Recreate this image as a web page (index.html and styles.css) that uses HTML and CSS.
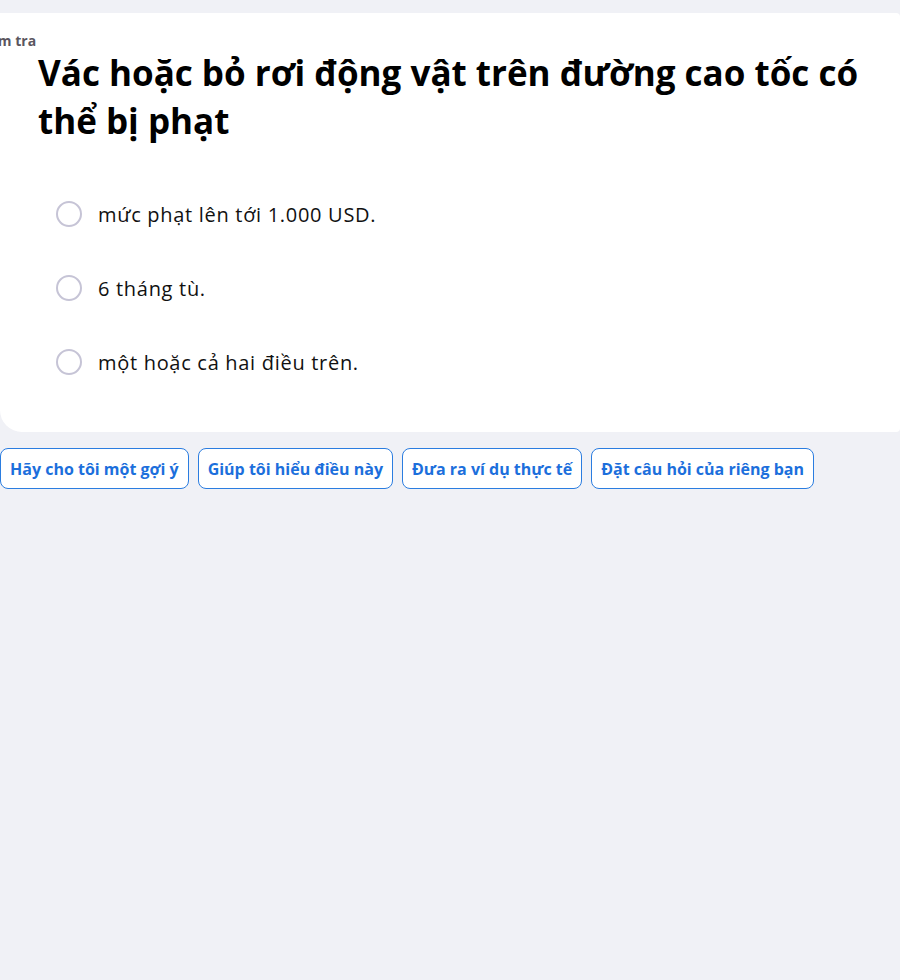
FILE: index.html
```html
<!DOCTYPE html>
<html lang="vi">
<head>
<meta charset="utf-8">
<link rel="stylesheet" href="styles.css">
</head>
<body>
<main class="page">
  <section class="card">
    <div class="label">Kiểm tra</div>
    <h1 class="question">Vác hoặc bỏ rơi động vật trên đường cao tốc có thể bị phạt</h1>
    <ul class="options">
      <li class="option"><span class="radio"></span><span class="opt-text">mức phạt lên tới 1.000 USD.</span></li>
      <li class="option"><span class="radio"></span><span class="opt-text">6 tháng tù.</span></li>
      <li class="option"><span class="radio"></span><span class="opt-text">một hoặc cả hai điều trên.</span></li>
    </ul>
  </section>
  <div class="chips">
    <button class="chip">Hãy cho tôi một gợi ý</button>
    <button class="chip">Giúp tôi hiểu điều này</button>
    <button class="chip">Đưa ra ví dụ thực tế</button>
    <button class="chip">Đặt câu hỏi của riêng bạn</button>
  </div>
</main>
</body>
</html>
```

FILE: styles.css
```css
html, body {
  margin: 0;
  padding: 0;
  background: #f0f1f6;
  overflow: hidden;
}
body {
  width: 900px;
  height: 980px;
  font-family: "Open Sans", "Noto Sans", sans-serif;
}
.page {
  padding-top: 13px;
}
.card {
  background: #ffffff;
  border-radius: 0 4px 4px 22px;
  padding: 20px 0 20px 0;
  box-sizing: border-box;
  height: 419px;
}
.label {
  margin-left: -24px;
  font-size: 14px;
  font-weight: 700;
  color: #5b5660;
  line-height: 16px;
}
.question {
  margin: 0 0 0 38px;
  font-size: 35px;
  line-height: 48px;
  font-weight: 700;
  color: #000;
  max-width: 840px;
}
.options {
  list-style: none;
  margin: 56px 0 0 56px;
  padding: 0;
  display: flex;
  flex-direction: column;
  gap: 48px;
}
.option {
  display: flex;
  align-items: center;
  gap: 16px;
  height: 26px;
}
.radio {
  width: 26px;
  height: 26px;
  box-sizing: border-box;
  border: 2px solid #c6c4d6;
  border-radius: 50%;
  flex: none;
}
.opt-text {
  font-size: 20px;
  letter-spacing: 0.7px;
  color: #111;
}
.chips {
  display: flex;
  gap: 9px;
  margin-top: 16px;
}
.chip {
  height: 41px;
  padding: 0 9px;
  border: 1px solid #2b7de0;
  border-radius: 8px;
  background: #fff;
  color: #1c6fdc;
  font-family: "Open Sans", "Noto Sans", sans-serif;
  font-size: 16px;
  font-weight: 700;
}
```
